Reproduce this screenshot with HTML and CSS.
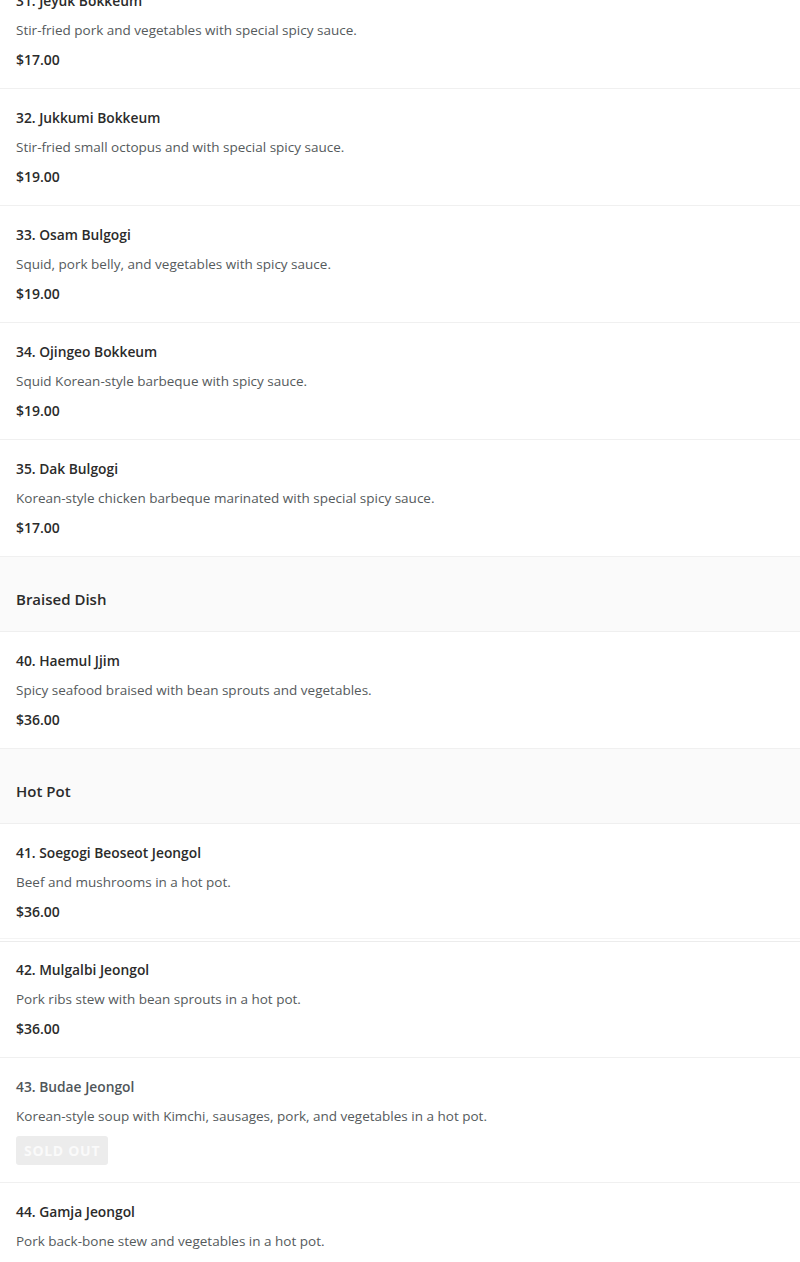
FILE: index.html
```html
<!DOCTYPE html>
<html lang="en">
<head>
<meta charset="utf-8">
<title>Menu</title>
<link rel="stylesheet" href="styles.css">
</head>
<body>
<main class="menu">
  <div class="item item-cut">
    <div class="name">31. Jeyuk Bokkeum</div>
    <div class="desc">Stir-fried pork and vegetables with special spicy sauce.</div>
    <div class="price">$17.00</div>
  </div>
  <div class="item">
    <div class="name">32. Jukkumi Bokkeum</div>
    <div class="desc">Stir-fried small octopus and with special spicy sauce.</div>
    <div class="price">$19.00</div>
  </div>
  <div class="item">
    <div class="name">33. Osam Bulgogi</div>
    <div class="desc">Squid, pork belly, and vegetables with spicy sauce.</div>
    <div class="price">$19.00</div>
  </div>
  <div class="item">
    <div class="name">34. Ojingeo Bokkeum</div>
    <div class="desc">Squid Korean-style barbeque with spicy sauce.</div>
    <div class="price">$19.00</div>
  </div>
  <div class="item">
    <div class="name">35. Dak Bulgogi</div>
    <div class="desc">Korean-style chicken barbeque marinated with special spicy sauce.</div>
    <div class="price">$17.00</div>
  </div>
  <div class="section">Braised Dish</div>
  <div class="item">
    <div class="name">40. Haemul Jjim</div>
    <div class="desc">Spicy seafood braised with bean sprouts and vegetables.</div>
    <div class="price">$36.00</div>
  </div>
  <div class="section">Hot Pot</div>
  <div class="item item-double">
    <div class="name">41. Soegogi Beoseot Jeongol</div>
    <div class="desc">Beef and mushrooms in a hot pot.</div>
    <div class="price">$36.00</div>
  </div>
  <div class="item">
    <div class="name">42. Mulgalbi Jeongol</div>
    <div class="desc">Pork ribs stew with bean sprouts in a hot pot.</div>
    <div class="price">$36.00</div>
  </div>
  <div class="item item-soldout">
    <div class="name">43. Budae Jeongol</div>
    <div class="desc">Korean-style soup with Kimchi, sausages, pork, and vegetables in a hot pot.</div>
    <div class="badge">SOLD OUT</div>
  </div>
  <div class="item">
    <div class="name">44. Gamja Jeongol</div>
    <div class="desc">Pork back-bone stew and vegetables in a hot pot.</div>
    <div class="price">$17.00</div>
  </div>
</main>
</body>
</html>
```

FILE: styles.css
```css
html, body {
  margin: 0;
  padding: 0;
  background: #ffffff;
}

body {
  font-family: "Open Sans", "Noto Sans", "Liberation Sans", sans-serif;
  color: #2b2b2b;
}

.menu {
  display: flex;
  flex-direction: column;
  width: 800px;
}

.item {
  display: flex;
  flex-direction: column;
  align-items: flex-start;
  gap: 9px;
  padding: 19px 16px 18px;
  border-bottom: 1px solid #f0f0f0;
}

.item-cut {
  margin-top: -28px;
}

.item-double {
  padding-bottom: 16px;
  border-bottom: 1px solid #f4f4f4;
  box-shadow: 0 2px 0 0 #fff, 0 3px 0 0 #ececec;
  margin-bottom: 2px;
}

.name {
  font-size: 13.8px;
  line-height: 20px;
  font-weight: 600;
  color: #2b2b2b;
}

.desc {
  font-size: 13.5px;
  line-height: 20px;
  color: #555a5c;
  margin-bottom: 1px;
}

.price {
  font-size: 14px;
  line-height: 20px;
  font-weight: 600;
  color: #2b2b2b;
}

.item-soldout {
  padding-bottom: 17px;
}

.item-soldout .name {
  color: #50565a;
}

.badge {
  background: #ececec;
  color: #fafafa;
  font-size: 14px;
  font-weight: 700;
  line-height: 29px;
  height: 29px;
  padding: 0 8px;
  border-radius: 3px;
  letter-spacing: 0.7px;
}

.section {
  background: #fafafa;
  border-bottom: 1px solid #efefef;
  padding: 32px 16px 22px;
  font-size: 15px;
  line-height: 20px;
  font-weight: 600;
  color: #2b2b2b;
}
```
